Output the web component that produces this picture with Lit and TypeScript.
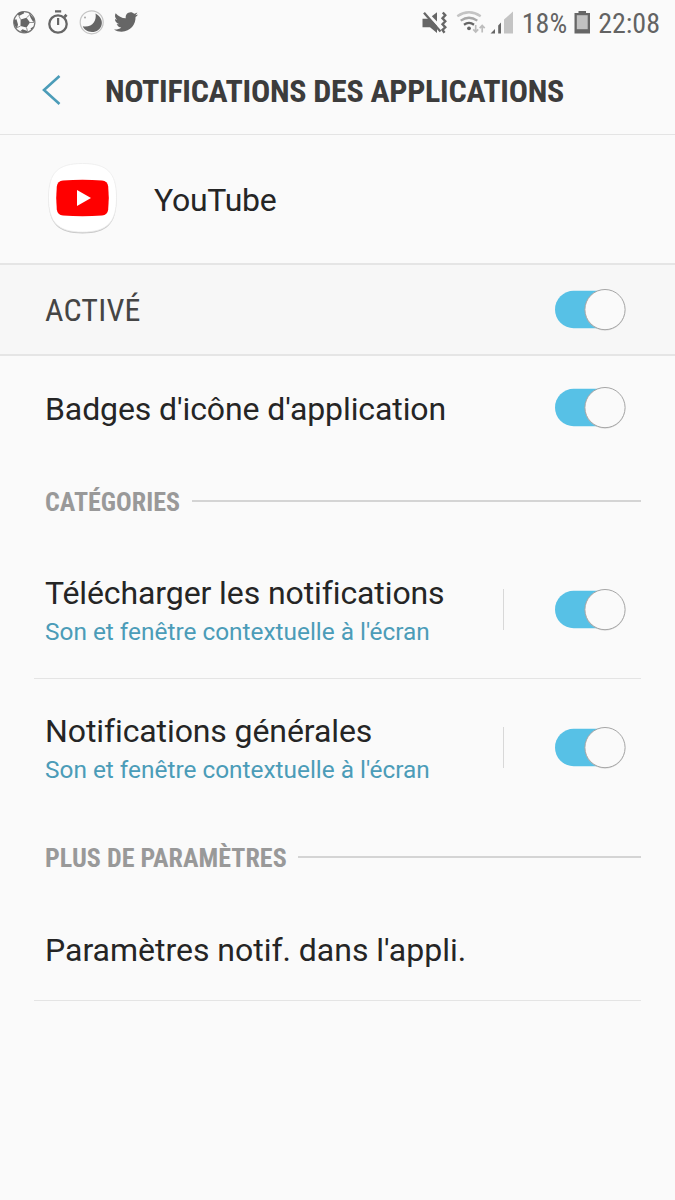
import { LitElement, html, css } from "lit";
import { customElement, property } from "lit/decorators.js";

@customElement("toggle-switch")
class ToggleSwitch extends LitElement {
  static styles = css`
    :host { display: block; flex: none; width: 72px; height: 44px; }
    svg { display: block; }
  `;
  render() {
    return html`<svg width="72" height="44" viewBox="0 0 72 44">
      <rect x="0" y="2.800" width="68" height="37.4" rx="18.7" fill="#57c1e6" />
      <circle cx="50" cy="22.400" r="20.200" fill="#c0c0c0" opacity="0.6" />
      <circle cx="50" cy="21.600" r="20.1" fill="#fafafa" stroke="#a6a6a6" stroke-width="1" />
    </svg>`;
  }
}

@customElement("section-title")
class SectionTitle extends LitElement {
  @property() label = "";
  static styles = css`
    :host { display: flex; align-items: center; height: 81px; padding: 0 34px 0 45px; gap: 11.5px; }
    .label { font: 700 26px/40px "Roboto Condensed", Roboto, sans-serif; font-stretch: 75%; letter-spacing: 0.03px; color: #999; white-space: nowrap; padding-top: 3px; }
    .rule { flex: 1; height: 2px; background: #d4d4d4; }
  `;
  render() {
    return html`<span class="label">${this.label}</span><span class="rule"></span>`;
  }
}

@customElement("app-root")
class AppRoot extends LitElement {
  static styles = css`
    :host { display: block; width: 675px; height: 1200px; background: #fafafa; color: #252525; font-family: Roboto, sans-serif; overflow: hidden; }
    * { box-sizing: border-box; }
    svg { display: block; flex: none; }
    .status { display: flex; height: 46px; justify-content: space-between; }
    .right { display: flex; color: #636363; font: 400 28px/48px "Roboto Condensed", Roboto, sans-serif; font-stretch: 75%; padding-right: 15px; }
    .header { display: flex; height: 89px; border-bottom: 1px solid #e4e4e4; }
    .title { margin: 0; font: 700 32px/91px "Roboto Condensed", Roboto, sans-serif; font-stretch: 75%; letter-spacing: -0.3px; color: #3c3c3c; white-space: nowrap; }
    .app { display: flex; height: 130px; border-bottom: 2px solid #e5e5e5; }
    .name { font-size: 32px; line-height: 130px; letter-spacing: -0.25px; }
    .row { display: flex; align-items: center; padding: 0 48px 0 45px; justify-content: space-between; }
    .active { height: 91px; background: #f7f7f7; border-bottom: 2px solid #e5e5e5; }
    .on { font: 400 32px/44px "Roboto Condensed", Roboto, sans-serif; font-stretch: 75%; letter-spacing: 0.2px; color: #454545; }
    .main { font-size: 32px; line-height: 40px; letter-spacing: -0.1px; white-space: nowrap; }
    .sub { font-size: 24.4px; line-height: 38px; color: #4b9cb8; white-space: nowrap; }
    .text { padding-top: 5px; }
    .badges { height: 104px; }
    .badges .main { padding-top: 1px; }
    .more { height: 103px; }
    .more .main { padding-top: 2px; letter-spacing: -0.02px; }
    .cat { height: 137px; }
    .end { display: flex; align-items: center; gap: 51px; }
    .bar { width: 1px; height: 41px; background: #d8d8d8; }
    .line { height: 1px; margin: 0 34px; background: #e4e4e4; }
  `;
  render() {
    const row = (t: string) => html`<div class="row cat"><div class="text"><div class="main">${t}</div><div class="sub">Son et fenêtre contextuelle à l'écran</div></div><div class="end"><span class="bar"></span><toggle-switch></toggle-switch></div></div>`;
    return html`
      <div class="status">
        <svg width="150" height="46" viewBox="0 0 150 46" fill="#666">
          <circle cx="24.300" cy="22.300" r="10.600" fill="#fafafa" stroke="#777" stroke-width="1.200" />
          <path d="M20.600 19.500L26.500 17.800L30 22.500L26.500 27.600L20.500 26Z M17.500 13.800Q20 11.500 23.500 11.600L24.200 13.200L19 16Z M29 13L34.300 19L33.500 22.500L30.500 17.500Z M13.700 20L16.500 19.200L18 24.500L17 28.500Q13.500 25.500 13.700 20Z M20.500 31L22.500 29.200L27.500 31L26.500 32.700Q23 33 20.500 31Z M30.500 28.500L33.500 26.500L31.500 30Z" />
          <path d="M26.500 17.800L29.800 14.800M30 22.500L34 22.500M26.500 27.600L27.600 31.500M20.500 26L17.200 27.600M20.600 19.500L18.800 15.800" stroke="#888" stroke-width="0.900" />
          <circle cx="58" cy="24" r="8.700" fill="none" stroke="#666" stroke-width="2.300" />
          <path d="M55 10.300H61.200V12.500H55Z M57 18H59.200V25H57Z M63.500 16L65.500 13.800L67.500 15.800L65.500 18Z" />
          <circle cx="91.700" cy="22.300" r="11.500" fill="none" stroke="#c4c4c4" stroke-width="1.200" />
          <path d="M95.500 13.400C106.500 19.500 102 32 92 32C87.500 32 84 29.500 82.800 26.300C92 28 97 20.500 95.500 13.400Z" />
          <circle cx="85" cy="17.600" r="1" fill="#aaa" />
          <path transform="translate(114 10)" d="M24 4.557c-.883.392-1.832.656-2.828.775 1.017-.609 1.798-1.574 2.165-2.724-.951.564-2.005.974-3.127 1.195-.897-.957-2.178-1.555-3.594-1.555-3.179 0-5.515 2.966-4.797 6.045-4.091-.205-7.719-2.165-10.148-5.144-1.290 2.213-.669 5.108 1.523 6.574-.806-.026-1.566-.247-2.229-.616-.054 2.281 1.581 4.415 3.949 4.890-.693.188-1.452.232-2.224.084.626 1.956 2.444 3.379 4.600 3.419-2.070 1.623-4.678 2.348-7.290 2.040 2.179 1.397 4.768 2.212 7.548 2.212 9.142 0 14.307-7.721 13.995-14.646.962-.695 1.797-1.562 2.457-2.549z" />
        </svg>
        <div class="right">
          <svg width="107" height="46" viewBox="415 0 107 46" fill="#666">
            <path d="M422.500 18.700H430L437 26V33L430 27.200H422.500Z M431.800 16.300L437 12.200V21.500Z" />
            <path d="M424 12.800L440.500 31.500" stroke="#666" stroke-width="2.300" />
            <path d="M442.800 12.500L445.300 15.300L442.500 18.300L445.300 21.300L442.500 24.300L445.300 27.300L442.500 30L444.500 32.800" fill="none" stroke="#666" stroke-width="2.400" />
            <g fill="none" stroke-width="2.300">
              <path d="M457.300 16.200Q469 8.300 480.700 16.200" stroke="#c4c4c4" />
              <path d="M460.700 20.600Q469 14.900 477.300 20.600" stroke="#a8a8a8" />
              <path d="M464 24.700Q469 21.200 474 24.700" stroke="#666" />
              <path d="M475.700 25V32M473.200 29.300L475.700 32L478.200 29.300M482.200 32.500V25.500M479.700 28.200L482.200 25.500L484.700 28.200" stroke="#bdbdbd" stroke-width="1.700" />
            </g>
            <circle cx="469" cy="28.300" r="1.900" />
            <path d="M490.500 33.500L495 29V33.500Z M498.200 25.500L501 22.500V33.500H498.200Z" />
            <path d="M504 19.500L513 11.500V33.500H504Z" fill="#c4c4c4" />
          </svg>
          <span>18%</span>
          <svg width="31" height="46" viewBox="567 0 31 46"><path d="M578.500 11H586V13H590V33.500H574.500V13H578.500Z" fill="#666" /><path d="M576.800 15.200H587.700V29.200H576.800Z" fill="#c1c1c1" /></svg>
          <span>22:08</span>
        </div>
      </div>
      <div class="header"><svg width="105" height="88" viewBox="0 46 105 88"><path d="M59.500 76L44 90L59.500 104" fill="none" stroke="#4b9cb8" stroke-width="2.600" /></svg><h1 class="title">NOTIFICATIONS DES APPLICATIONS</h1></div>
      <div class="app">
        <svg width="154" height="127" viewBox="0 135 154 127">
          <path d="M82.500 165C107 165 116.500 174 116.500 198.800C116.500 224 107 233.500 82.500 233.500C58 233.500 48.500 224 48.500 198.800C48.500 174 58 165 82.500 165Z" fill="#c9c9c9" />
          <path d="M82.500 163.500C107 163.500 116.500 172.500 116.500 197.500C116.500 222.500 107 232 82.500 232C58 232 48.500 222.500 48.500 197.500C48.500 172.500 58 163.500 82.500 163.500Z" fill="#fff" stroke="#ececec" stroke-width="0.800" />
          <path d="M63 180.500Q82.500 179 102 180.500Q107.500 181 108.200 186.500Q109.400 198 108.200 209.500Q107.500 215 102 215.500Q82.500 217 63 215.500Q57.500 215 56.800 209.500Q55.600 198 56.800 186.500Q57.500 181 63 180.500Z" fill="#f00" />
          <path d="M77 190L91 198L77 206Z" fill="#fff" />
        </svg>
        <span class="name">YouTube</span>
      </div>
      <div class="row active"><span class="on">ACTIVÉ</span><toggle-switch></toggle-switch></div>
      <div class="row badges"><span class="main">Badges d'icône d'application</span><toggle-switch></toggle-switch></div>
      <section-title label="CATÉGORIES"></section-title>
      ${row("Télécharger les notifications")}
      <div class="line"></div>
      ${row("Notifications générales")}
      <section-title label="PLUS DE PARAMÈTRES"></section-title>
      <div class="row more"><span class="main">Paramètres notif. dans l'appli.</span></div>
      <div class="line"></div>`;
  }
}
